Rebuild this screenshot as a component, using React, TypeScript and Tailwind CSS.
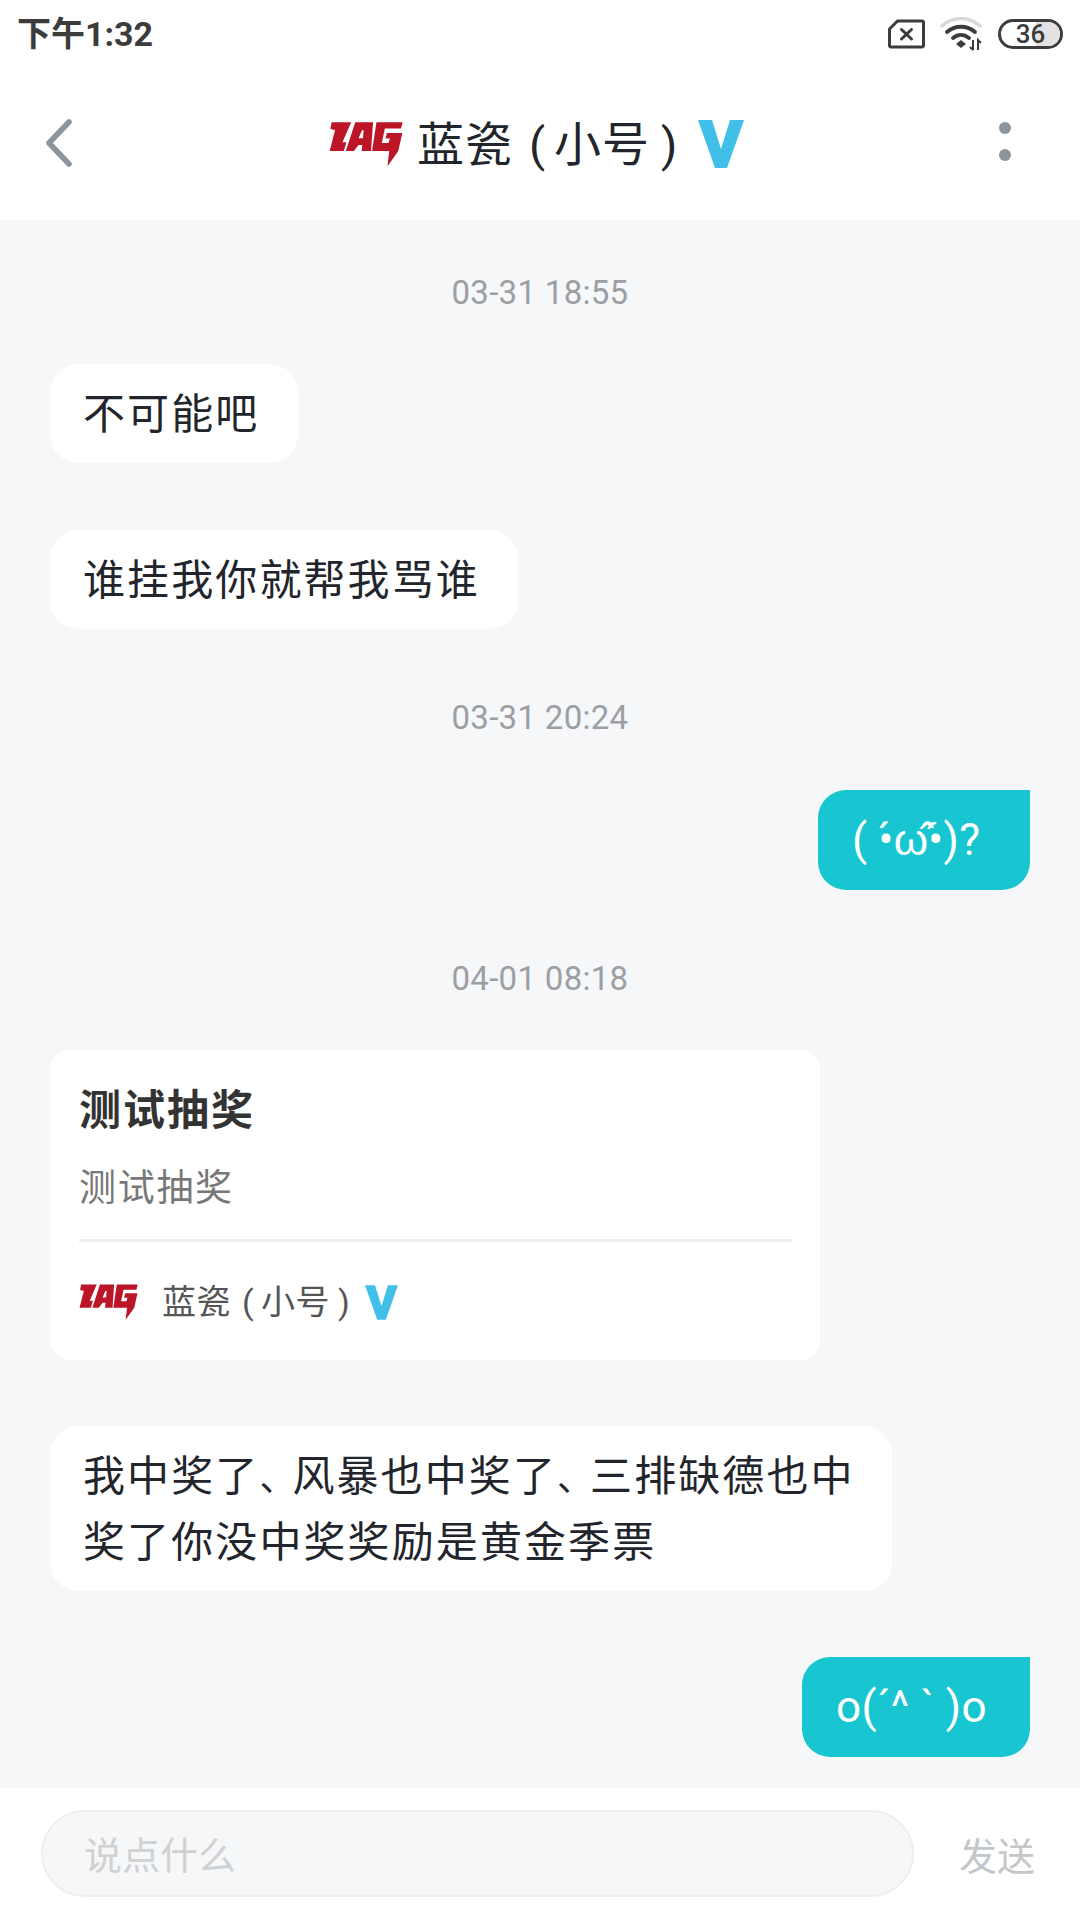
import type { ReactNode } from "react";

const cjk = "font-['Roboto','Noto_Sans_CJK_SC',sans-serif]";

function LagLogo({ className }: { className: string }) {
  return (
    <svg viewBox="26 42 220 134" className={className}>
      <path
        fill="#bd1528"
        fillRule="evenodd"
        d="M34 44H92L66 104H78L70 130H28L44 68L30 64ZM104 44H157L151 130H123L125 112H114L100 130H76ZM124 68L114 92H127L129 68ZM167 44H245L240 63H192L183 106H203L207 93H194L198 76H244L232 130L200 175L205 130H154Z"
      />
    </svg>
  );
}

function VBadge({ className }: { className: string }) {
  return (
    <svg viewBox="0 0 46 48" className={className}>
      <path fill="#40bfe8" d="M0 0H14L23 29L32 0H46L29 48H17Z" />
    </svg>
  );
}

function StatusIcons() {
  return (
    <div className="flex items-center">
      <svg viewBox="0 0 37 30" className="h-[30px] w-[37px]">
        <path
          d="M9.500 2H34a1.500 1.500 0 0 1 1.500 1.500V26.500A1.500 1.500 0 0 1 34 28H3a1.500 1.500 0 0 1-1.500-1.500V10Z"
          fill="none"
          stroke="#3c3c3c"
          strokeWidth="3"
          strokeLinejoin="round"
        />
        <path d="M13.500 10.500L23.500 20M23.500 10.500L13.500 20" stroke="#3c3c3c" strokeWidth="3" strokeLinecap="round" />
      </svg>
      <svg viewBox="0 0 44 34" className="ml-[15px] h-[34px] w-[44px]">
        <path d="M2 9C13 -1 29 -1 40 9" fill="none" stroke="#d9d9d9" strokeWidth="3.500" strokeLinecap="round" />
        <path d="M7 15C15 8 27 8 35 15" fill="none" stroke="#3c3c3c" strokeWidth="3.800" strokeLinecap="round" />
        <path d="M13 21C18 17 24 17 29 21" fill="none" stroke="#3c3c3c" strokeWidth="3.800" strokeLinecap="round" />
        <path d="M16 27L21 23L26 27L21 31Z" fill="#3c3c3c" />
        <path d="M33 23V33M30 30L33 33M38 33V23L41 26" fill="none" stroke="#3c3c3c" strokeWidth="2" />
      </svg>
      <div className="relative ml-[14px] flex h-[30px] w-[65px] items-center justify-center overflow-hidden rounded-full border-[3px] border-[#3c3c3c]">
        <div className="absolute top-0 right-0 bottom-0 w-[24px] bg-[#e2e2e2]" />
        <span className="relative font-['Roboto',sans-serif] text-[26px] leading-none font-medium text-[#3c3c3c]">36</span>
      </div>
    </div>
  );
}

function TimeLabel({ text, className }: { text: string; className: string }) {
  return (
    <p className={`h-10 text-center font-['Roboto',sans-serif] text-[33px] leading-[42px] tracking-[0.3px] text-[#9b9fa4] ${className}`}>
      {text}
    </p>
  );
}

function LeftBubble({ children, className }: { children: ReactNode; className: string }) {
  return (
    <div className={`rounded-[28px] bg-white pt-[19px] pb-[17px] pl-[33px] text-[42px] leading-[63px] tracking-[2.100px] whitespace-nowrap text-[#22252b] ${className}`}>
      {children}
    </div>
  );
}

function RightBubble({ children, className, width }: { children: string; className: string; width: string }) {
  return (
    <div className={`ml-auto flex h-[100px] items-center rounded-[28px] rounded-tr-none bg-[#17c6d0] pl-[34px] text-[44px] tracking-[0.3px] text-white ${width} ${className}`}>
      {children}
    </div>
  );
}

export default function App() {
  return (
    <div className={`flex h-[1920px] w-[1080px] flex-col overflow-hidden bg-[#f6f7f9] ${cjk}`}>
      <header className="h-[220px] bg-white">
        <div className="flex h-[68px] items-center justify-between px-[17px]">
          <span className="text-[34px] font-bold text-[#3c3c3c]">下午1:32</span>
          <StatusIcons />
        </div>
        <div className="relative flex h-[152px] items-center justify-center pr-[7px]">
          <svg viewBox="0 0 28 48" className="absolute top-[51px] left-[45px] h-[48px] w-[28px]">
            <path d="M24 3L4 24L24 45" fill="none" stroke="#8d949c" strokeWidth="5.500" strokeLinecap="round" strokeLinejoin="round" />
          </svg>
          <LagLogo className="h-[46px] w-[74px]" />
          <span className="ml-[14px] flex items-center text-[47px] leading-none tracking-[1px] text-[#22252b]">
            蓝瓷
            <span className="inline-block w-[41px] pl-[16px] font-normal">(</span>
            小号
            <span className="inline-block w-[48px] pl-[11px] font-normal">)</span>
          </span>
          <VBadge className="h-[48px] w-[46px]" />
          <div className="absolute top-[54px] right-[69px] flex flex-col gap-[15px]">
            <span className="h-[12px] w-[12px] rounded-full bg-[#8d949c]" />
            <span className="h-[12px] w-[12px] rounded-full bg-[#8d949c]" />
          </div>
        </div>
      </header>

      <main className="flex-1 px-[50px] pt-[52px]">
        <TimeLabel text="03-31 18:55" className="" />
        <LeftBubble className="mt-[52px] w-[248px]">不可能吧</LeftBubble>
        <LeftBubble className="mt-[67px] w-[468px]">谁挂我你就帮我骂谁</LeftBubble>
        <TimeLabel text="03-31 20:24" className="mt-[68px]" />
        <RightBubble className="mt-[53px]" width="w-[212px]">( •́ω̋•̀)?</RightBubble>
        <TimeLabel text="04-01 08:18" className="mt-[68px]" />

        <article className="mt-[52px] h-[310px] w-[770px] rounded-[20px] bg-white px-[29px] pt-[33px]">
          <h2 className="text-[42px] leading-[56px] font-bold tracking-[2px] text-[#333333]">测试抽奖</h2>
          <p className="mt-[25px] text-[37px] leading-[50px] tracking-[1.700px] text-[#777777]">测试抽奖</p>
          <div className="mt-[25px] h-[3px] w-[713px] bg-[#eeeeef]" />
          <div className="mt-[42px] flex items-center">
            <LagLogo className="h-[36px] w-[59px]" />
            <span className="ml-[24px] flex items-center text-[34px] leading-none tracking-[0.5px] text-[#555555]">
              蓝瓷
              <span className="inline-block w-[30px] pl-[11px] font-normal">(</span>
              小号
              <span className="inline-block w-[35px] pl-[8px] font-normal">)</span>
            </span>
            <VBadge className="h-[35px] w-[33px]" />
          </div>
        </article>

        <LeftBubble className="mt-[66px] w-[842px]">
          <div>
            我中奖了<span className="text-[36px] tracking-[-3px]">、</span>风暴也中奖了<span className="text-[36px] tracking-[-3px]">、</span>三排缺德也中
          </div>
          <div>奖了你没中奖奖励是黄金季票</div>
        </LeftBubble>
        <RightBubble className="mt-[66px]" width="w-[228px]">o(´^ ` )o</RightBubble>
      </main>

      <footer className="flex h-[132px] items-start bg-white pt-[22px] pl-[41px]">
        <div className="flex h-[87px] w-[873px] items-center rounded-full border-2 border-[#eceef0] bg-[#f6f7f9] pt-[5px] pl-[41px] text-[38px] text-[#cfd1d3]">
          说点什么
        </div>
        <span className="mt-[22px] ml-[45px] text-[38px] leading-[50px] text-[#c4c7ca]">发送</span>
      </footer>
    </div>
  );
}
